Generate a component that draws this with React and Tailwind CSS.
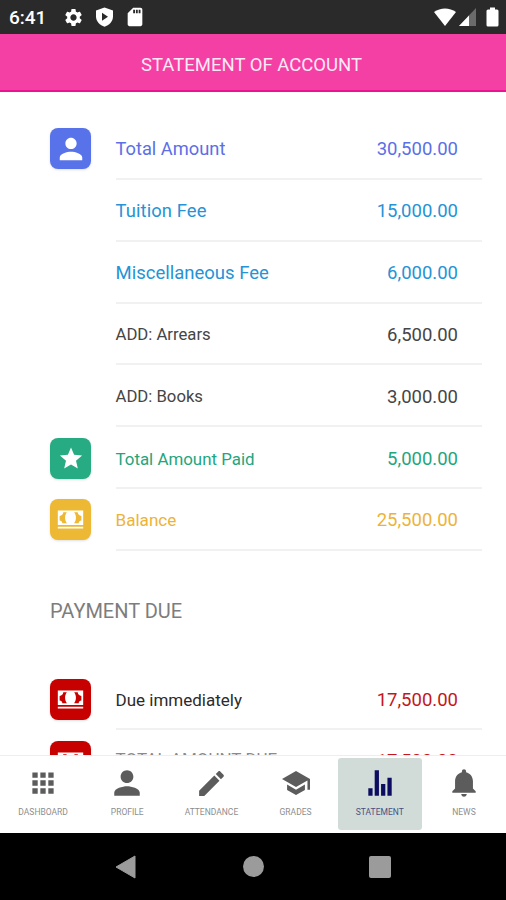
import React from 'react';
import {
    IoMdApps,
    IoMdCash,
    IoMdCreate,
    IoMdNotifications,
    IoMdPerson,
    IoMdSchool,
    IoMdStar,
    IoMdStats
} from 'react-icons/io';
import { MdSettings, MdSdCard } from 'react-icons/md';

const accountItems = [
    { label: 'Total Amount', amount: '30,500.00', color: 'text-[#5b6fe6]', icon: <IoMdPerson size={30} />, tile: 'bg-[#5873ea]', text: 'text-[18.3px]' },
    { label: 'Tuition Fee', amount: '15,000.00', color: 'text-[#2593d6]', text: 'text-[18.4px] tracking-[0.1px]' },
    { label: 'Miscellaneous Fee', amount: '6,000.00', color: 'text-[#2593d6]', text: 'text-[18.5px]' },
    { label: 'ADD: Arrears', amount: '6,500.00', color: 'text-[#454545]', text: 'text-[16.7px]' },
    { label: 'ADD: Books', amount: '3,000.00', color: 'text-[#454545]', text: 'text-[16.7px]' },
    { label: 'Total Amount Paid', amount: '5,000.00', color: 'text-[#25a57c]', icon: <IoMdStar size={28} />, tile: 'bg-[#26ab82]', text: 'text-[16.9px]' },
    { label: 'Balance', amount: '25,500.00', color: 'text-[#edb338]', icon: <IoMdCash size={29} />, tile: 'bg-[#edb935]', text: 'text-[17.1px]' }
];

const dueItems = [
    { label: 'Due immediately', amount: '17,500.00', color: 'text-[#2b2b2b]', amountColor: 'text-[#c4161c]', icon: <IoMdCash size={29} />, tile: 'bg-[#c70000]', text: 'text-[17px]' },
    { label: 'TOTAL AMOUNT DUE', amount: '17,500.00', color: 'text-[#8a8a8a]', amountColor: 'text-[#c4161c] -mt-[2px]', icon: <IoMdCash size={29} />, tile: 'bg-[#c70000]', text: 'text-[17px] -mt-[5px]' }
];

const tabs = [
    { label: 'DASHBOARD', icon: <IoMdApps size={34} /> },
    { label: 'PROFILE', icon: <IoMdPerson size={34} /> },
    { label: 'ATTENDANCE', icon: <IoMdCreate size={33} /> },
    { label: 'GRADES', icon: <IoMdSchool size={32} /> },
    { label: 'STATEMENT', icon: <IoMdStats size={34} />, active: true },
    { label: 'NEWS', icon: <IoMdNotifications size={34} /> }
];

const StatusBar = () => (
    <div className="flex h-[34px] shrink-0 items-center bg-[#2a2a2a] pl-[9px] pr-[7px] text-white">
        <span className="w-[54px] text-[19px] font-medium leading-none">6:41</span>
        <MdSettings size={21} />
        <svg className="ml-[11px]" width="19" height="20" viewBox="0 0 19 20">
            <path d="M9.5 0.5 18 3.5V9.5C18 14.5 14 18.5 9.5 19.7 5 18.5 1 14.5 1 9.5V3.5Z" fill="currentColor" />
            <path d="M7 5.8 13 9.8 7 13.8Z" fill="#2a2a2a" />
        </svg>
        <MdSdCard className="ml-[10px]" size={22} />
        <svg className="ml-auto" width="22" height="19" viewBox="0 0 22 19">
            <path d="M0 4C6.5-0.8 15.5-0.8 22 4L11 18Z" fill="currentColor" />
        </svg>
        <svg className="ml-[3px]" width="17" height="18" viewBox="0 0 17 18">
            <path d="M17 0V18H0Z" fill="#6b6b6b" />
            <path d="M10 7.4V18H0Z" fill="currentColor" />
        </svg>
        <svg className="ml-[10px]" width="13" height="20" viewBox="0 0 13 20">
            <path d="M4 0.5H9V2.5H11A1.5 1.5 0 0 1 12.5 4V18A1.5 1.5 0 0 1 11 19.5H2A1.5 1.5 0 0 1 0.5 18V4A1.5 1.5 0 0 1 2 2.5H4Z" fill="currentColor" />
        </svg>
    </div>
);

const Row = ({ item }) => (
    <div className={`flex h-[61.85px] shrink-0 items-center pl-[50px] pr-6 ${item.color}`}>
        <div className="w-[65.5px] shrink-0">
            {item.icon && (
                <div className={`flex h-[41px] w-[41px] items-center justify-center rounded-lg text-white shadow-sm ${item.tile}`}>
                    {item.icon}
                </div>
            )}
        </div>
        <div className="flex h-full flex-1 items-center justify-between border-b-2 border-[#f1f1f1] pr-6 pt-[3px]">
            <span className={`whitespace-nowrap leading-[22px] ${item.text}`}>{item.label}</span>
            <span className={`text-[18.5px] leading-[22px] ${item.amountColor || ''}`}>{item.amount}</span>
        </div>
    </div>
);

const TabBar = () => (
    <div className="flex h-[78px] shrink-0 border-t border-[#eeeeee] bg-white pb-[3px] pl-px pt-[2px]">
        {tabs.map((tab) => (
            <div
                key={tab.label}
                className={`flex flex-1 flex-col items-center rounded-[3px] pt-[8px] ${tab.active ? 'bg-[#d1dcd9] text-[#0c0c60]' : 'text-[#5c5c5c]'}`}
            >
                <div className="flex h-[34px] items-center">{tab.icon}</div>
                <span className="mt-[7px] text-[8.5px] leading-[10px] opacity-70">{tab.label}</span>
            </div>
        ))}
    </div>
);

const NavBar = () => (
    <div className="flex h-[67px] shrink-0 items-center justify-between bg-black px-[115px]">
        <svg width="21" height="24" viewBox="0 0 21 24">
            <path d="M20 1V23L1 12Z" fill="#9b9b9b" stroke="#9b9b9b" strokeLinejoin="round" />
        </svg>
        <div className="ml-[2px] h-[21px] w-[21px] rounded-full bg-[#9b9b9b]" />
        <div className="h-[22px] w-[22px] rounded-[2px] bg-[#9b9b9b]" />
    </div>
);

const App = () => (
    <div className="flex h-[900px] w-[506px] flex-col overflow-hidden bg-white font-[Roboto,sans-serif]">
        <StatusBar />
        <header className="flex h-[58px] shrink-0 items-center justify-center border-b-2 border-[#e8158f] bg-[#f43fa5] pr-[3px] pt-[6px] text-[18.5px] leading-6 text-[#ffe9f6]">
            STATEMENT OF ACCOUNT
        </header>

        <main className="flex min-h-0 flex-1 flex-col overflow-hidden pt-[26px]">
            {accountItems.map((item) => (
                <Row key={item.label} item={item} />
            ))}
            <h2 className="mb-[43.5px] mt-[46px] pl-[50px] text-[20px] leading-7 text-[#7d7d7d]">PAYMENT DUE</h2>
            {dueItems.map((item) => (
                <Row key={item.label} item={item} />
            ))}
        </main>

        <TabBar />
        <NavBar />
    </div>
);

export default App;
